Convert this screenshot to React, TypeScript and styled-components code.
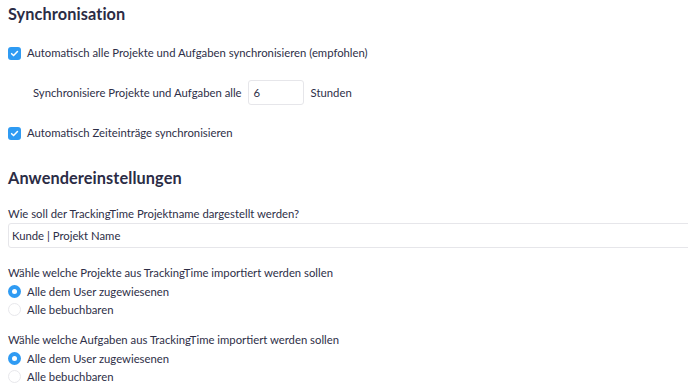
import React from "react";
import styled, { createGlobalStyle } from "styled-components";

const Global = createGlobalStyle`
  html, body { margin: 0; padding: 0; background: #fff; }
  body { font-family: Lato, "Open Sans", sans-serif; color: #2e2f48; }
  * { box-sizing: border-box; }
`;

const Page = styled.div`
  width: 688px;
  height: 392px;
  overflow: hidden;
  padding: 4px 0 0 8px;
  display: flex;
  flex-direction: column;
`;

const Title = styled.h2<{ $mt?: number }>`
  margin: ${(p) => p.$mt ?? 0}px 0 0 0;
  font-size: 16.3px;
  font-weight: 700;
  line-height: 20px;
  height: 20px;
  color: #2b2c45;
  letter-spacing: 0.1px;
`;

const CheckRow = styled.label<{ $mt: number }>`
  display: flex;
  align-items: center;
  gap: 6px;
  margin-top: ${(p) => p.$mt}px;
  font-size: 11.3px;
  line-height: 14px;
  height: 14px;
`;

const Box = styled.span`
  width: 13px;
  height: 13px;
  border-radius: 3px;
  background: #2f9bf3;
  display: flex;
  align-items: center;
  justify-content: center;
  flex: none;
`;

const IntervalRow = styled.div`
  display: flex;
  align-items: center;
  gap: 6px;
  margin-top: 20px;
  padding-left: 25px;
  font-size: 11.3px;
  height: 25px;
`;

const SmallInput = styled.div`
  width: 56px;
  height: 25px;
  border: 1px solid #e6e6ea;
  border-radius: 3px;
  padding: 0 5px;
  display: flex;
  align-items: center;
  font-size: 11.3px;
  margin-right: 1px;
`;

const Label = styled.div<{ $mt: number }>`
  margin-top: ${(p) => p.$mt}px;
  font-size: 11.3px;
  line-height: 14px;
  height: 14px;
`;

const WideInput = styled.div`
  margin-top: 2px;
  width: 700px;
  height: 25px;
  flex: none;
  border: 1px solid #e6e6ea;
  border-radius: 3px;
  padding: 0 3px;
  display: flex;
  align-items: center;
  font-size: 11.3px;
`;

const RadioRow = styled.div<{ $mt: number }>`
  display: flex;
  align-items: center;
  gap: 6px;
  margin-top: ${(p) => p.$mt}px;
  height: 14px;
  flex: none;
  font-size: 11.3px;
`;

const Radio = styled.span<{ $on: boolean }>`
  width: 13px;
  height: 13px;
  border-radius: 50%;
  flex: none;
  background: ${(p) => (p.$on ? "#2f9bf3" : "#fff")};
  border: ${(p) => (p.$on ? "none" : "1px solid #e8e8ec")};
  display: flex;
  align-items: center;
  justify-content: center;
  &::after {
    content: "";
    display: ${(p) => (p.$on ? "block" : "none")};
    width: 5px;
    height: 5px;
    border-radius: 50%;
    background: #fff;
  }
`;

const Check = () => (
  <Box>
    <svg width="9" height="9" viewBox="0 0 10 10">
      <path d="M1.8 5.2 L4 7.3 L8.3 2.8" fill="none" stroke="#fff" strokeWidth="1.7" strokeLinecap="round" strokeLinejoin="round" />
    </svg>
  </Box>
);

export default function App() {
  return (
    <Page>
      <Global />
      <Title>Synchronisation</Title>
      <CheckRow $mt={22}>
        <Check />
        Automatisch alle Projekte und Aufgaben synchronisieren (empfohlen)
      </CheckRow>
      <IntervalRow>
        Synchronisiere Projekte und Aufgaben alle
        <SmallInput>6</SmallInput>
        Stunden
      </IntervalRow>
      <CheckRow $mt={21}>
        <Check />
        Automatisch Zeiteinträge synchronisieren
      </CheckRow>
      <Title $mt={28}>Anwendereinstellungen</Title>
      <Label $mt={19}>Wie soll der TrackingTime Projektname dargestellt werden?</Label>
      <WideInput>Kunde | Projekt Name</WideInput>
      <Label $mt={18}>Wähle welche Projekte aus TrackingTime importiert werden sollen</Label>
      <RadioRow $mt={4}>
        <Radio $on />
        Alle dem User zugewiesenen
      </RadioRow>
      <RadioRow $mt={4}>
        <Radio $on={false} />
        Alle bebuchbaren
      </RadioRow>
      <Label $mt={17}>Wähle welche Aufgaben aus TrackingTime importiert werden sollen</Label>
      <RadioRow $mt={4}>
        <Radio $on />
        Alle dem User zugewiesenen
      </RadioRow>
      <RadioRow $mt={4}>
        <Radio $on={false} />
        Alle bebuchbaren
      </RadioRow>
    </Page>
  );
}
